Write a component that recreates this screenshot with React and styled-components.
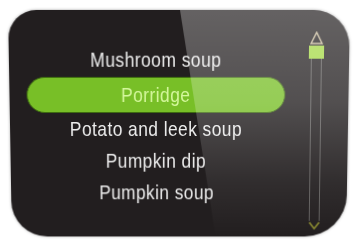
import React from "react";
import styled, { createGlobalStyle } from "styled-components";

const items = [
  "Mushroom soup",
  "Porridge",
  "Potato and leek soup",
  "Pumpkin dip",
  "Pumpkin soup",
];

const selected = 1;

const GlobalStyle = createGlobalStyle`
  html, body {
    margin: 0;
    padding: 0;
    background: #ffffff;
  }
  body {
    font-family: "Liberation Sans", Arial, sans-serif;
  }
`;

const Page = styled.div`
  width: 359px;
  height: 251px;
  padding: 11px 0 0 10px;
  box-sizing: border-box;
  overflow: hidden;
`;

const Screen = styled.div`
  position: relative;
  width: 338px;
  height: 227px;
  box-sizing: border-box;
  padding: 21px 0 0 17px;
  display: flex;
  align-items: flex-start;
  background: #221e1f;
  border-radius: 28px 36px 42px 36px;
  box-shadow: 0 0 3px rgba(0, 0, 0, 0.35);
  overflow: hidden;
  transform: perspective(700px) rotateX(-4deg);
`;

const Gloss = styled.div`
  position: absolute;
  inset: 0;
  pointer-events: none;
  clip-path: polygon(170px 0, 100% 0, 100% 100%, 206px 100%);
  background: linear-gradient(
    180deg,
    rgba(255, 255, 255, 0.3) 0%,
    rgba(255, 255, 255, 0.22) 40%,
    rgba(255, 255, 255, 0.07) 75%,
    rgba(255, 255, 255, 0) 100%
  );
`;

const List = styled.ul`
  list-style: none;
  margin: 12px 0 0;
  padding: 0;
  width: 258px;
  display: flex;
  flex-direction: column;
`;

const Item = styled.li`
  height: ${(p) => (p.$active ? "36px" : "32px")};
  margin-top: ${(p) => (p.$active ? "1px" : "0")};
  display: flex;
  align-items: center;
  justify-content: center;
  box-sizing: border-box;
  color: ${(p) => (p.$active ? "#d4f79c" : "#ececec")};
  background: ${(p) => (p.$active ? "#78bf27" : "transparent")};
  border: ${(p) => (p.$active ? "1px solid #3d6a10" : "none")};
  border-radius: 18px;
`;

const Label = styled.span`
  display: inline-block;
  font-size: 20px;
  letter-spacing: 0.5px;
  white-space: nowrap;
  transform: scale(0.87, 1.03);
`;

const Scroll = styled.div`
  margin-left: 23px;
  width: 15px;
  display: flex;
  flex-direction: column;
  align-items: center;
`;

const Thumb = styled.div`
  width: 15px;
  height: 13px;
  background: #a4d943;
  margin-top: 1px;
`;

const Track = styled.div`
  width: 11px;
  height: 163px;
  box-sizing: border-box;
  border-left: 1px solid #5f5d5c;
  border-right: 1px solid #5f5d5c;
`;

const UpArrow = () => (
  <svg width="15" height="13" viewBox="0 0 15 13">
    <path d="M7.5 1 L13 12 L2 12 Z" fill="none" stroke="#cdbf9f" strokeWidth="1.4" />
  </svg>
);

const DownArrow = () => (
  <svg width="15" height="10" viewBox="0 0 15 10">
    <path d="M2.5 1.5 L7.5 8 L12.5 1.5" fill="none" stroke="#8a8a2e" strokeWidth="1.6" />
  </svg>
);

export default function App() {
  return (
    <Page>
      <GlobalStyle />
      <Screen>
        <List>
          {items.map((name, i) => (
            <Item key={name} $active={i === selected}>
              <Label>{name}</Label>
            </Item>
          ))}
        </List>
        <Scroll>
          <UpArrow />
          <Thumb />
          <Track />
          <DownArrow />
        </Scroll>
        <Gloss />
      </Screen>
    </Page>
  );
}
